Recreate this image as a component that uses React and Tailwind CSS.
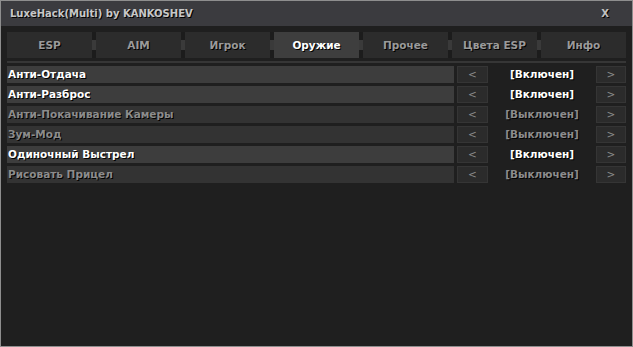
const tabs = ["ESP", "AIM", "Игрок", "Оружие", "Прочее", "Цвета ESP", "Инфо"];
const active = 3;

const rows = [
  { name: "Анти-Отдача", on: true },
  { name: "Анти-Разброс", on: true },
  { name: "Анти-Покачивание Камеры", on: false },
  { name: "Зум-Мод", on: false },
  { name: "Одиночный Выстрел", on: true },
  { name: "Рисовать Прицел", on: false },
];

const shadow = "[text-shadow:1px_1px_0_#000]";

function Row({ name, on }) {
  return (
    <div className="flex h-[17px] items-stretch">
      <div
        className={`flex-1 flex items-center pl-[1px] ${shadow} ${
          on ? "bg-[#3d3d3d] text-white" : "bg-[#333333] text-[#8c8c8c]"
        }`}
      >
        {name}
      </div>
      <div className="w-[31px] ml-[3px] bg-[#2b2b2b] border border-[#353535] flex items-center justify-center text-[#8a8a8a] font-normal">
        &lt;
      </div>
      <div
        className={`w-[108px] flex items-center justify-center ${shadow} ${
          on ? "text-white" : "text-[#8c8c8c]"
        }`}
      >
        {on ? "[Включен]" : "[Выключен]"}
      </div>
      <div className="w-[30px] bg-[#2b2b2b] border border-[#353535] flex items-center justify-center text-[#8a8a8a] font-normal">
        &gt;
      </div>
    </div>
  );
}

export default function App() {
  return (
    <div className="w-[633px] h-[347px] bg-[#1f1f1f] border border-[#8e8e8e] flex flex-col font-['DejaVu_Sans',sans-serif] text-[10.5px] font-bold leading-none">
      {/* title bar */}
      <div className="h-[25px] bg-[#3b3b3f] flex items-center justify-between pl-[9px] pr-[23px]">
        <span className={`text-[#c8c8c8] text-[10px] ${shadow}`}>LuxeHack(Multi) by KANKOSHEV</span>
        <span className={`text-[#c0c0c0] text-[10px] ${shadow}`}>X</span>
      </div>

      {/* tabs */}
      <div className="mt-[6px] mx-[6px] h-[26px] flex">
        {tabs.map((t, i) => (
          <div key={t} className="flex">
            {i > 0 && (
              <div className="w-[4px] bg-[#1c1c1c] flex items-center">
                <div className="w-full h-[10px] bg-[#3a3a3a]" />
              </div>
            )}
            <div
              className={`w-[85px] flex items-center justify-center ${shadow} ${
                i === active ? "bg-[#3e3e3e] text-white" : "bg-[#2c2c2c] text-[#9a9a9a]"
              }`}
            >
              {t}
            </div>
          </div>
        ))}
      </div>

      <div className="mt-[3px] mx-[6px] h-[2px] bg-[#363636]" />

      {/* options */}
      <div className="mt-[3px] mx-[6px] flex flex-col gap-[3px]">
        {rows.map((r) => (
          <Row key={r.name} {...r} />
        ))}
      </div>
    </div>
  );
}
